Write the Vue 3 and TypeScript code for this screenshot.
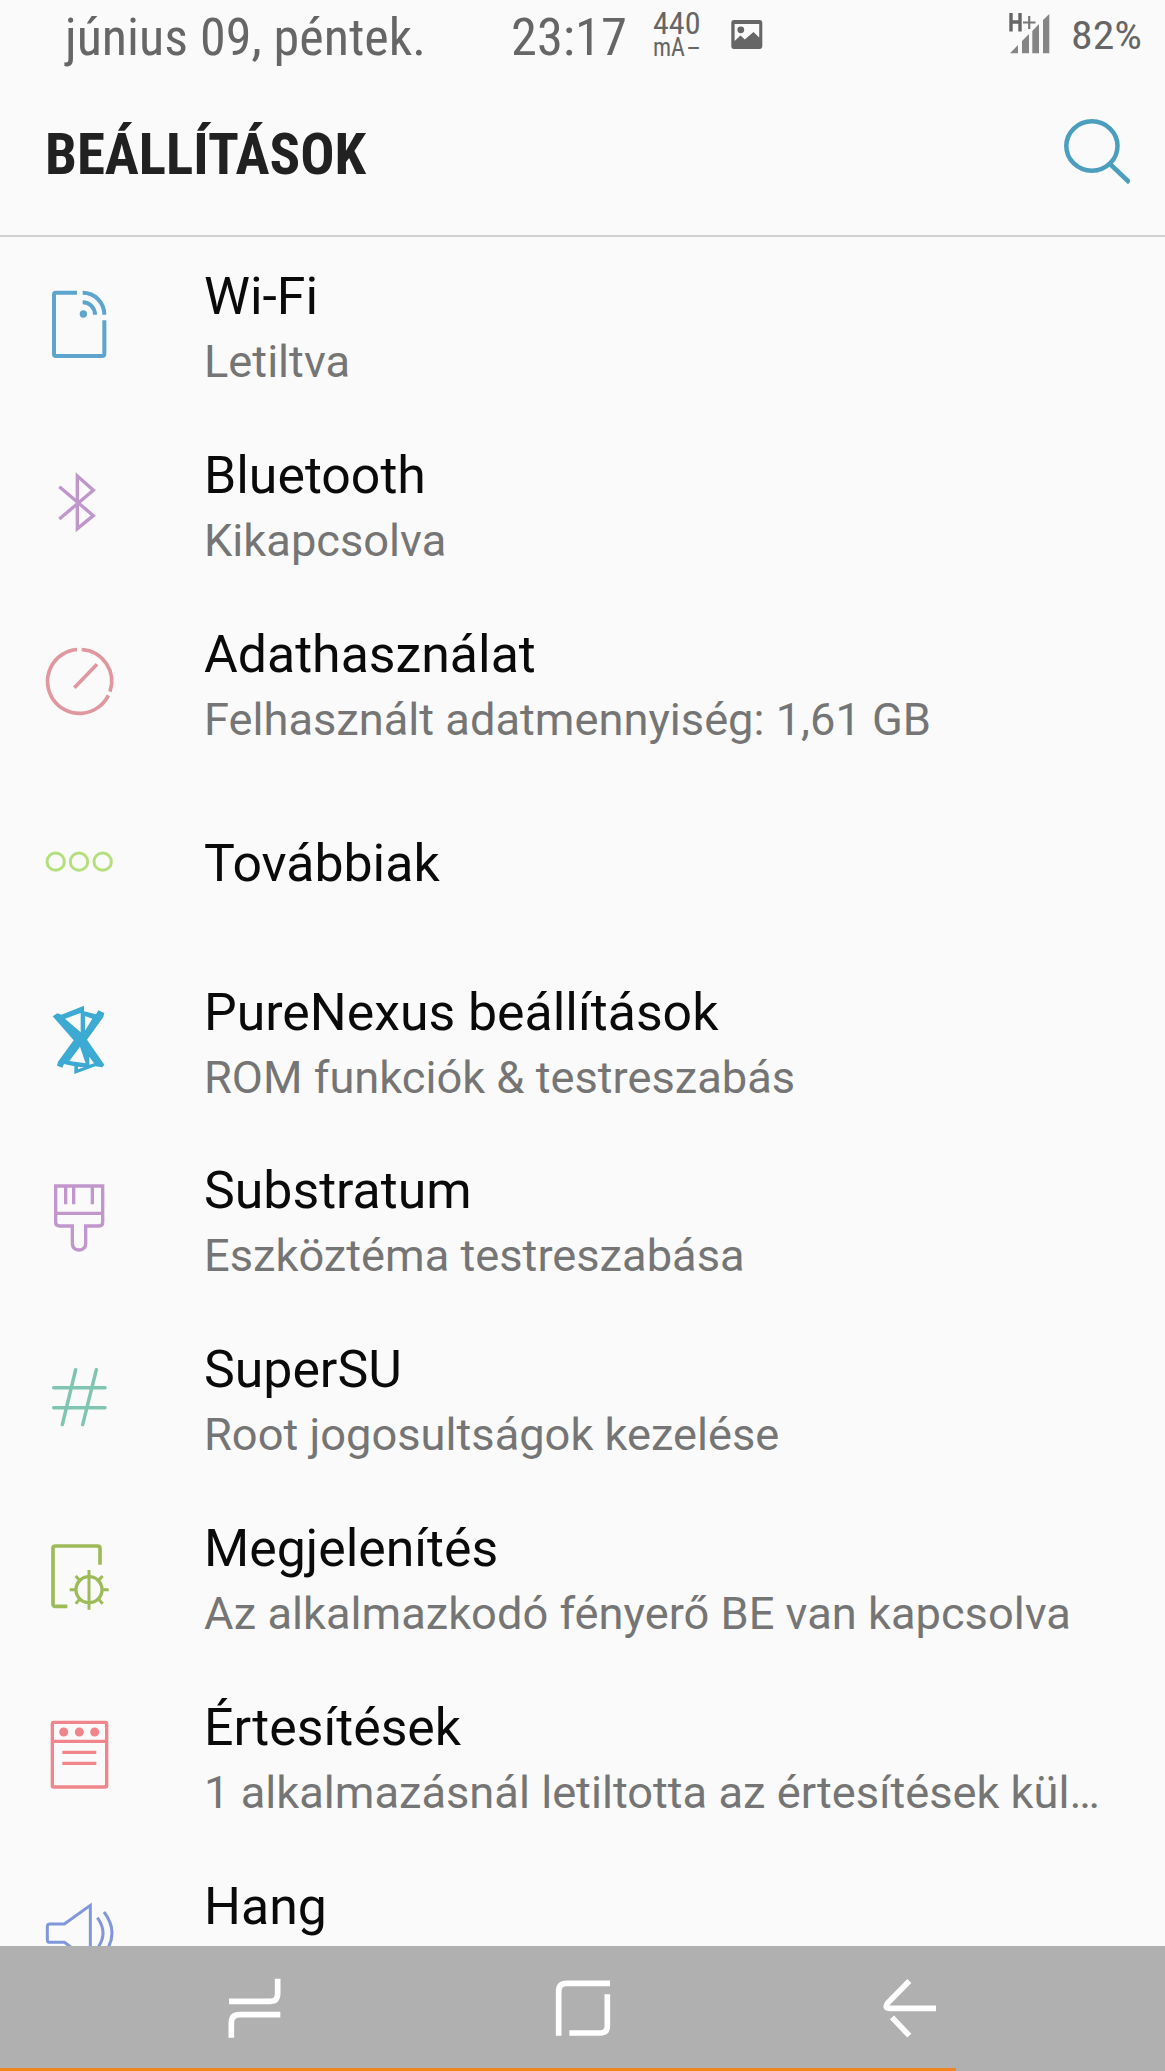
<script setup lang="ts">
interface Setting {
  id: string
  title: string
  summary?: string
  color: string
}

const settings: Setting[] = [
  { id: 'wifi', title: 'Wi-Fi', summary: 'Letiltva', color: '#5ea5cd' },
  { id: 'bluetooth', title: 'Bluetooth', summary: 'Kikapcsolva', color: '#c096cd' },
  { id: 'data', title: 'Adathasználat', summary: 'Felhasznált adatmennyiség: 1,61 GB', color: '#e0979f' },
  { id: 'more', title: 'Továbbiak', color: '#b5df7d' },
  { id: 'purenexus', title: 'PureNexus beállítások', summary: 'ROM funkciók & testreszabás', color: '#3caad2' },
  { id: 'substratum', title: 'Substratum', summary: 'Eszköztéma testreszabása', color: '#c096cd' },
  { id: 'supersu', title: 'SuperSU', summary: 'Root jogosultságok kezelése', color: '#80c4b2' },
  { id: 'display', title: 'Megjelenítés', summary: 'Az alkalmazkodó fényerő BE van kapcsolva', color: '#9dbb59' },
  { id: 'notifications', title: 'Értesítések', summary: '1 alkalmazásnál letiltotta az értesítések kül…', color: '#f0868b' },
  { id: 'sound', title: 'Hang', color: '#8097dc' },
]
</script>

<template>
  <div class="screen">
    <header class="top">
      <div class="status">
        <svg class="date" width="362" height="75" viewBox="0 0 362 75"><text x="0" y="55" font-size="52" textLength="361" lengthAdjust="spacingAndGlyphs">június 09, péntek.</text></svg>
        <svg class="clock" width="116" height="75" viewBox="0 0 116 75"><text x="0" y="55" font-size="52" textLength="116" lengthAdjust="spacingAndGlyphs">23:17</text></svg>
        <svg class="current" width="48" height="75" viewBox="0 0 48 75">
          <text x="0" y="33.800" font-size="30.500" textLength="47.500" lengthAdjust="spacingAndGlyphs">440</text>
          <text x="0" y="56" font-size="26" textLength="32" lengthAdjust="spacingAndGlyphs">mA</text>
          <text x="34" y="56" font-size="26" textLength="13" lengthAdjust="spacingAndGlyphs">-</text>
        </svg>
        <svg class="picture" width="32" height="75" viewBox="0 0 32 75">
          <path fill="#666" fill-rule="evenodd" d="M3 20H28.500Q31.300 20 31.300 23V46Q31.300 49 28.500 49H3Q.3 49 .3 46V23Q.3 20 3 20ZM3.600 24V41L9.500 35.500L13.800 39.500L22.500 32L28.200 37.500V24Z" />
          <circle cx="9.800" cy="29.800" r="3.400" fill="#666" />
        </svg>
        <svg class="signal" width="42" height="75" viewBox="0 0 42 75">
          <g fill="#858585">
            <path d="M1 53.300L9 45V53.300Z" />
            <path d="M13 53.300V41L20 34V53.300Z" />
            <path d="M23.300 53.300V31L30 24V53.300Z" />
            <path d="M34 53.300V20L40.300 14V53.300Z" />
          </g>
          <path d="M2 13V31.500M11 13V31.500M2 22H11" fill="none" stroke="#666" stroke-width="3.400" />
          <path d="M14 22.500H26.500M20.200 16V29" fill="none" stroke="#777" stroke-width="2.200" />
        </svg>
        <svg class="battery" width="72" height="75" viewBox="0 0 72 75"><text x="0" y="49" font-size="39.500" textLength="71" lengthAdjust="spacingAndGlyphs">82%</text></svg>
      </div>
      <div class="appbar">
        <svg class="heading" width="322" height="120" viewBox="0 0 322 120"><text x="0" y="99" font-size="57" textLength="321" lengthAdjust="spacingAndGlyphs">BEÁLLÍTÁSOK</text></svg>
        <svg class="search" width="70" height="120" viewBox="0 0 70 120" fill="none" stroke="#4b9ebe" stroke-width="4.500">
          <ellipse cx="31.900" cy="71" rx="25.600" ry="24.700" />
          <path d="M50 89L69.500 107.500" />
        </svg>
      </div>
    </header>

    <main class="list">
      <div v-for="s in settings" :key="s.id" class="row">
        <svg class="icon" width="110" height="110" viewBox="0 0 330 330" fill="none" :stroke="s.color" stroke-width="12">
          <g v-if="s.id === 'wifi'" transform="translate(0 2)">
            <path d="M141 69.500H78Q72 69.500 72 76V252Q72 259 78 259H216Q223 259 223 252V152" />
            <path d="M158 69.500A65 65 0 0 1 223 135M158 98A37 37 0 0 1 195 135" />
            <circle cx="160" cy="133" r="11" :fill="s.color" stroke="none" />
          </g>
          <g v-else-if="s.id === 'bluetooth'" transform="translate(0 6)" stroke-width="10">
            <path d="M88 110L190 197L142 236V78L190 121L88 207" />
          </g>
          <g v-else-if="s.id === 'data'" transform="translate(0 9)" stroke-width="11">
            <path d="M141 58.500A96 96 0 1 0 235 196M155 58.500A96 96 0 0 1 240 185M133 173L201 103" />
          </g>
          <g v-else-if="s.id === 'more'" stroke-width="9">
            <circle cx="77" cy="167" r="26" /><circle cx="147" cy="167" r="26" /><circle cx="218" cy="167" r="26" />
          </g>
          <g v-else-if="s.id === 'purenexus'" transform="translate(0 17)" stroke="none" :fill="s.color">
            <path fill-rule="evenodd" d="M68 77L82 68L94 72L162 45V62L198 71L205 59L223 67L220 79L171 147L223 222L217 230L196 227L133 250V227L102 220L97 231L81 225L84 213L131 149ZM105 84L152 125V67ZM165 76V120L187 84ZM150 168L118 211L167 218ZM178 198V222L192 218ZM144 228V236L162 230Z" />
          </g>
          <g v-else-if="s.id === 'substratum'" transform="translate(0 20)" stroke-width="10">
            <path d="M77 49H218V158Q218 169 207 169H167V221Q167 241 147 241Q127 241 127 221V169H89Q77 169 77 158ZM77 131H218M107 49V104M131 49V104M187 49V104" />
          </g>
          <g v-else-if="s.id === 'supersu'" transform="translate(0 -516)" stroke-width="10.500" stroke-linecap="round">
            <path d="M71 653H225M71 713H225M137 599L97 764M199 599L158 764" />
          </g>
          <g v-else-if="s.id === 'display'" transform="translate(0 27)" stroke-width="11">
            <path d="M210 104V55Q210 48 203 48H76Q69 48 69 55V222Q69 229 76 229H112" />
            <circle cx="177" cy="179" r="39" stroke-width="10" />
            <path stroke-width="9" d="M177 120V239M119 179H137M217 179H236M137 138L149 151M218 138L206 151M137 221L149 208M218 221L206 208" />
          </g>
          <g v-else-if="s.id === 'notifications'" transform="translate(0 -510)" stroke-width="10">
            <rect x="67" y="577" width="163" height="194" rx="4" />
            <path d="M67 634H230M97 667H199M97 700H199" />
            <g :fill="s.color" stroke="none"><circle cx="101" cy="606" r="13.500" /><circle cx="148" cy="606" r="13.500" /><circle cx="194" cy="606" r="13.500" /></g>
          </g>
          <g v-else transform="translate(0 4)" stroke-width="9">
            <path d="M103 131H60Q52 131 52 139V178Q52 186 60 186H103L181 242V75ZM202 112Q236 158 202 204M222 95Q270 158 222 221" />
          </g>
        </svg>
        <div class="texts" :class="{ tall: s.id === 'sound' }">
          <div class="title">{{ s.title }}</div>
          <div v-if="s.summary" class="summary">{{ s.summary }}</div>
        </div>
      </div>
    </main>

    <nav class="nav">
      <div class="keys">
        <svg width="60" height="70" viewBox="585 280 180 210"><path d="M743 297V343Q743 365 721 365H597M604 474V430Q604 405 629 405H751" /></svg>
        <svg width="60" height="70" viewBox="67 130 180 210"><path d="M84 318V185Q84 161 108 161H238M230 194V288Q230 310 208 310H116" /></svg>
        <svg width="60" height="70" viewBox="1050 130 180 210"><path d="M1138 154L1073 220Q1062 236 1078 236H1218M1086 263L1138 318" /></svg>
      </div>
      <div class="progress"></div>
    </nav>
  </div>
</template>

<style>
body {
  margin: 0;
  background: #fafafa;
}
</style>

<style scoped>
.screen {
  width: 1165px;
  height: 2071px;
  display: flex;
  flex-direction: column;
  overflow: hidden;
  background: #fafafa;
  font-family: Roboto, "Liberation Sans", sans-serif;
}
.top {
  height: 235px;
  flex: none;
  border-bottom: 2px solid #d0d0d0;
}
svg {
  display: block;
  flex: none;
}
.status {
  display: flex;
  height: 75px;
}
.status svg {
  fill: #666;
  font-family: "Roboto Condensed", Roboto, sans-serif;
  font-stretch: 75%;
  overflow: visible;
}
.date { margin-left: 65px; }
.clock { margin-left: 84px; }
.current { margin-left: 26px; }
.picture { margin-left: 29.500px; }
.signal { margin-left: 246px; }
.battery { margin-left: 20.500px; }
.appbar {
  display: flex;
  justify-content: space-between;
  padding: 0 35px 0 45px;
}
.heading {
  fill: #212121;
  font-family: "Roboto Condensed", Roboto, sans-serif;
  font-stretch: 75%;
  font-weight: 700;
}
.list {
  flex: 1;
  min-height: 0;
  overflow: hidden;
  margin-top: -2px;
}
.row {
  height: 178.800px;
  display: flex;
  align-items: center;
  padding-left: 30px;
}
.texts {
  margin-left: 64px;
  padding-top: 6px;
  white-space: nowrap;
}
.tall {
  min-height: 122px;
}
.title {
  font-size: 51.800px;
  line-height: 61px;
  color: #0a0a0a;
}
.summary {
  margin-top: 8px;
  font-size: 45.230px;
  line-height: 53px;
  color: #757575;
}
.nav {
  flex: none;
  height: 125px;
  display: flex;
  flex-direction: column;
  justify-content: space-between;
  background: #b0b0b0;
}
.keys {
  display: flex;
  justify-content: space-between;
  padding: 27px 225px 0 225px;
}
.keys path {
  fill: none;
  stroke: #fff;
  stroke-width: 17;
}
.progress {
  width: 956px;
  height: 3px;
  background: #ef8420;
}
</style>
